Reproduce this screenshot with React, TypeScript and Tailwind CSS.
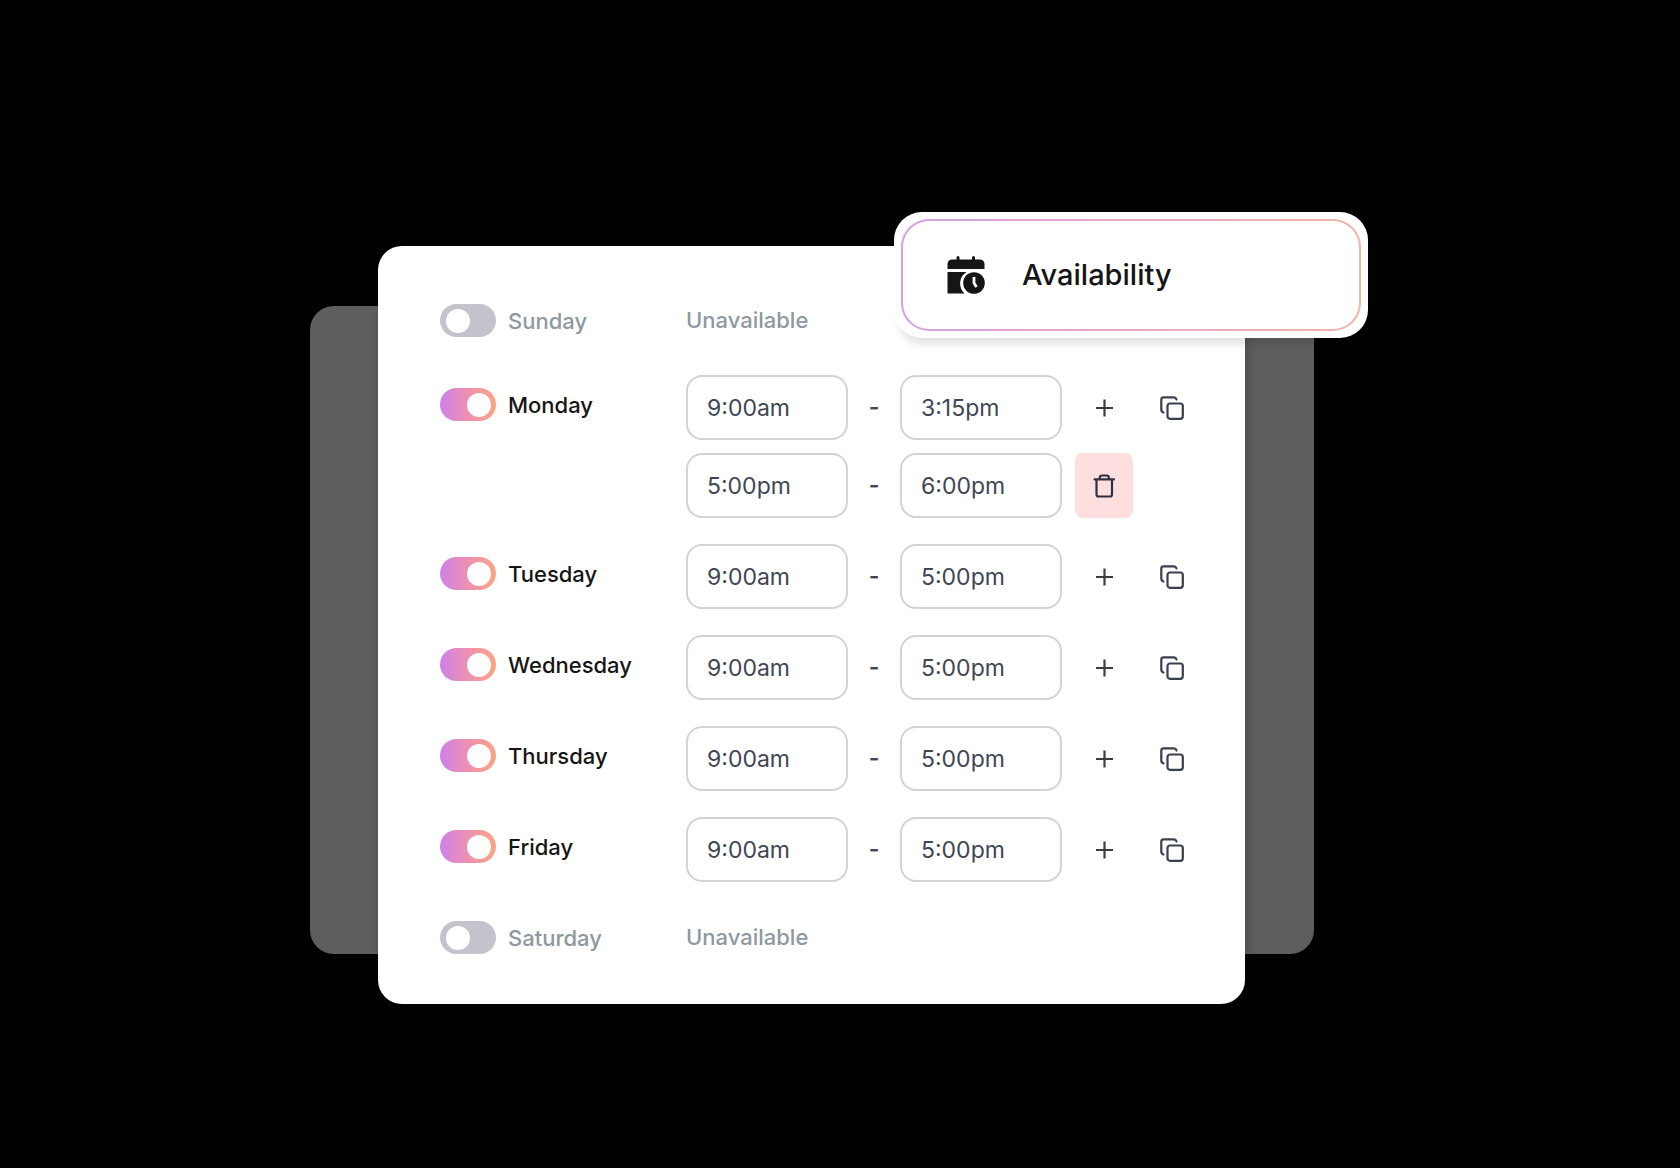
import { useState } from "react";

type Slot = { from: string; to: string };
type Day = { name: string; enabled: boolean; slots: Slot[] };

const week: Day[] = [
  { name: "Sunday", enabled: false, slots: [] },
  {
    name: "Monday",
    enabled: true,
    slots: [
      { from: "9:00am", to: "3:15pm" },
      { from: "5:00pm", to: "6:00pm" },
    ],
  },
  { name: "Tuesday", enabled: true, slots: [{ from: "9:00am", to: "5:00pm" }] },
  { name: "Wednesday", enabled: true, slots: [{ from: "9:00am", to: "5:00pm" }] },
  { name: "Thursday", enabled: true, slots: [{ from: "9:00am", to: "5:00pm" }] },
  { name: "Friday", enabled: true, slots: [{ from: "9:00am", to: "5:00pm" }] },
  { name: "Saturday", enabled: false, slots: [] },
];

function CalendarClockIcon() {
  return (
    <svg width="38" height="38" viewBox="0 0 38 38" fill="#151515" aria-hidden="true">
      <path d="M0.5 13V8a4.5 4.5 0 0 1 4.5-4.5H9.5V1.5a1.5 1.5 0 0 1 3 0v2h12.5V1.5a1.5 1.5 0 0 1 3 0v2h5a4.5 4.5 0 0 1 4.5 4.5V13z" />
      <path d="M0.5 16H19.5A13.5 13.5 0 0 0 17.5 37.5H0.5z" />
      <circle cx="27" cy="27" r="10.8" />
      <path d="M27 21v6l2.5 4" fill="none" stroke="#fff" strokeWidth="2.8" />
    </svg>
  );
}

function PlusIcon() {
  return (
    <svg width="18" height="18" viewBox="0 0 18 18" stroke="#3b3d42" strokeWidth="2.2" aria-hidden="true">
      <path d="M9.5 0.5v17M1 9h17" />
    </svg>
  );
}

function CopyIcon() {
  return (
    <svg
      width="24"
      height="24"
      viewBox="0 0 24 24"
      fill="none"
      stroke="#3a3f4e"
      strokeWidth="2.2"
      strokeLinecap="round"
      aria-hidden="true"
    >
      <path d="M3.5 16.5Q1.3 15.8 1.3 13.5V3.5Q1.3 1.3 3.5 1.3H13.5Q15.8 1.3 16.5 3.5" />
      <rect x="7.5" y="7.5" width="15.3" height="15.3" rx="2.5" />
    </svg>
  );
}

function TrashIcon() {
  return (
    <svg
      width="22"
      height="24"
      viewBox="0 0 22 24"
      fill="none"
      stroke="#2f3044"
      strokeWidth="2.2"
      strokeLinecap="round"
      strokeLinejoin="round"
      aria-hidden="true"
    >
      <path d="M1.5 5.3h19.5M6.8 5V3.5a2 2 0 0 1 2-2h5a2 2 0 0 1 2 2V5M3.5 5.3v15.2a2 2 0 0 0 2 2h11.5a2 2 0 0 0 2-2V5.3" />
    </svg>
  );
}

function TimeInput({ label, value }: { label: string; value: string }) {
  return (
    <input
      type="text"
      aria-label={label}
      defaultValue={value}
      className="h-[65px] w-[162px] min-w-0 rounded-2xl border-2 border-[#d3d3d4] bg-white px-[19px] text-[23px] text-[#404654]"
    />
  );
}

function DayRow({ day }: { day: Day }) {
  const [on, setOn] = useState(day.enabled);
  const id = day.name.toLowerCase();

  return (
    <div className="flex min-h-[58px] items-start">
      <div className="flex w-[246px] items-center gap-3 pt-[13px]">
        <input
          id={id}
          type="checkbox"
          role="switch"
          checked={on}
          onChange={(e) => setOn(e.target.checked)}
          className="h-[33px] w-14 shrink-0 appearance-none rounded-full bg-[#c3c3cb] pt-[5px] pl-[6px] before:block before:size-6 before:rounded-full before:bg-white checked:bg-linear-to-r checked:from-[#cd80e8] checked:via-[#ee90b0] checked:to-[#fca482] checked:pl-[27px]"
        />
        <label
          htmlFor={id}
          className={on ? "text-[22px] leading-[30px] font-medium text-[#151515]" : "text-[22px] leading-[30px] font-medium text-[#8f989f]"}
        >
          {day.name}
        </label>
      </div>

      {day.slots.length === 0 && (
        <p className="pt-[14px] text-[22px] leading-[30px] font-medium text-[#8f989f]">Unavailable</p>
      )}

      <div className="flex flex-col gap-[13px]">
        {day.slots.map((slot, i) => (
          <div key={i} className="flex items-center">
            <TimeInput label={`${day.name} from`} value={slot.from} />
            <span className="w-[52px] text-center text-[23px] font-semibold text-[#404654]">-</span>
            <TimeInput label={`${day.name} to`} value={slot.to} />
            {i === 0 ? (
              <>
                <button type="button" aria-label="Add hours" className="ml-[13px] flex h-[65px] w-[58px] items-center justify-center rounded-lg">
                  <PlusIcon />
                </button>
                <button type="button" aria-label="Copy hours" className="ml-[10px] flex h-[65px] w-[58px] items-center justify-center rounded-lg">
                  <CopyIcon />
                </button>
              </>
            ) : (
              <button type="button" aria-label="Remove hours" className="ml-[13px] flex h-[65px] w-[58px] items-center justify-center rounded-lg bg-[#fedfdf]">
                <TrashIcon />
              </button>
            )}
          </div>
        ))}
      </div>
    </div>
  );
}

export default function App() {
  return (
    <main className="flex min-h-screen items-start justify-center bg-black pt-[212px] pr-[18px] pb-16 pl-4 font-['Inter',sans-serif]">
      <div className="relative isolate w-full max-w-[1058px]">
        {/* Backdrop panel */}
        <div className="absolute top-[94px] right-[54px] bottom-[50px] left-0 -z-10 rounded-3xl bg-[#5e5e5e]" />

        {/* Schedule card */}
        <section className="mt-[34px] mr-[123px] ml-[68px] flex flex-col gap-[26px] rounded-3xl bg-white pt-[45px] pr-11 pb-[38px] pl-[62px] shadow-[2px_2px_10px_rgba(0,0,0,0.2)]">
          {week.map((day) => (
            <DayRow key={day.name} day={day} />
          ))}
        </section>

        {/* Floating title */}
        <div className="absolute top-0 right-0 w-[474px] rounded-[28px] bg-white p-[7px] shadow-[0_12px_8px_-6px_rgba(0,0,0,0.12)]">
          <div className="rounded-[28px] bg-linear-to-r from-[#d3a0e0] to-[#f4b3a8] p-[2px]">
            <div className="flex h-[108px] items-center gap-[37px] rounded-[26px] bg-white pl-11">
              <CalendarClockIcon />
              <h1 className="text-[29px] font-medium text-[#151515]">Availability</h1>
            </div>
          </div>
        </div>
      </div>
    </main>
  );
}
